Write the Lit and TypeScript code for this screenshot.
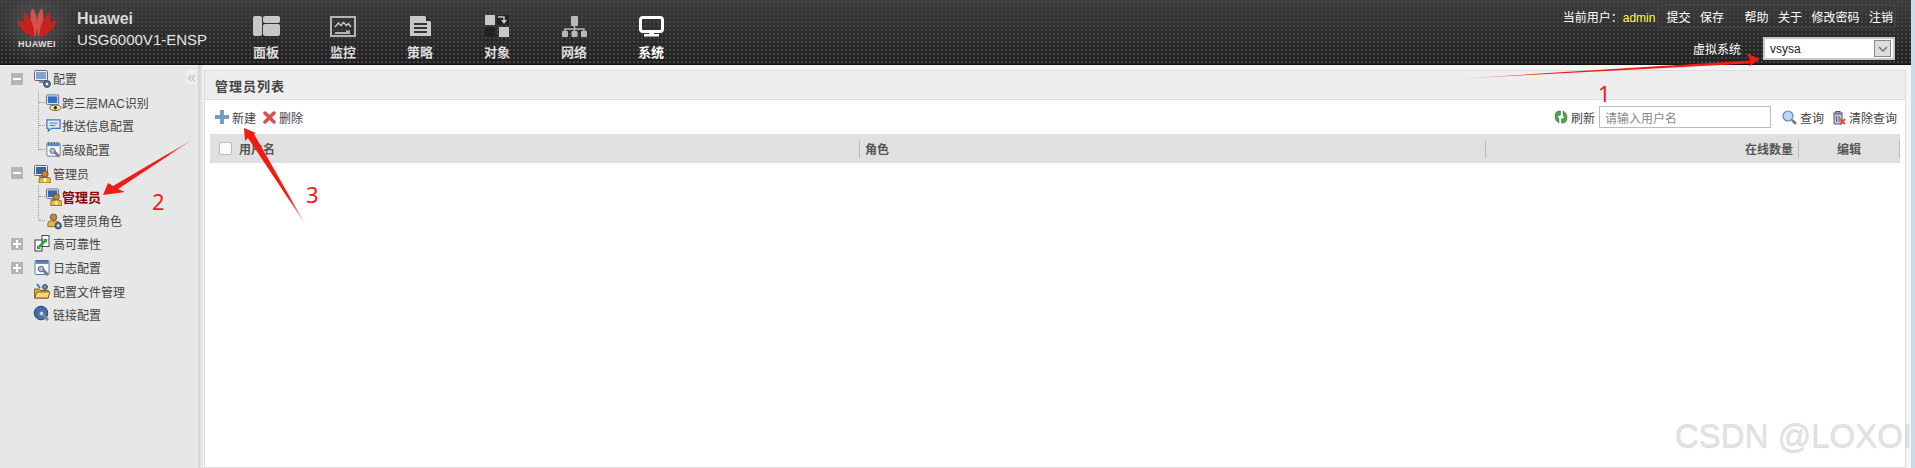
import { LitElement, html, css, svg } from "lit";
import { customElement } from "lit/decorators.js";

const screen = (c = "#3a6fc0") => svg`<rect x="1.5" y="1.5" width="13" height="10" rx="1" fill="#e8eef6" stroke="#667"/><rect x="3" y="3" width="10" height="7" fill="${c}"/><rect x="6" y="12" width="5" height="2" fill="#889"/>`;
const person = svg`<circle cx="12" cy="10" r="3.2" fill="#c9853c" stroke="#5a3a14" stroke-width=".7"/><path d="M6 19v-3q0-2.5 3-2.5h6q3 0 3 2.5v3z" fill="#e8b93c" stroke="#6a4d10" stroke-width=".7"/><path d="M11 14h2v4h-2z" fill="#fff"/>`;
const gear = svg`<circle cx="14" cy="15" r="3.4" fill="#5b7a9a" stroke="#2c4560"/><circle cx="14" cy="15" r="1.2" fill="#fff"/>`;
const calendar = svg`<rect x="2" y="2.5" width="14" height="14" rx="1" fill="#fff" stroke="#5e7da6"/><rect x="2.5" y="3" width="13" height="3" fill="#5b8ec9"/><path d="M4 2v2M7 2v2M10 2v2M13 2v2" stroke="#445"/><path d="M8 10l7 7" stroke="#778" stroke-width="3"/><circle cx="8" cy="11" r="2.8" fill="#bbc" stroke="#667"/>`;

const ICONS: Record<string, unknown> = {
  config: svg`${screen("#7fa2d0")}${gear}`,
  mac: svg`${screen("#2f6fd0")}<ellipse cx="11" cy="15" rx="6" ry="3" fill="#f4e7a8" stroke="#6a5520"/><circle cx="11" cy="15" r="1.8" fill="#3a2a10"/>`,
  push: svg`<path d="M2 3.5h14v9H7l-3.5 3v-3H2z" fill="#d9e8f8" stroke="#3f78bd" stroke-width="1.3"/><path d="M5 7h8M5 9.5h6" stroke="#3f78bd"/>`,
  calendar,
  admin: svg`${screen("#3a64a8")}${person}`,
  role: svg`<circle cx="9" cy="6" r="3.5" fill="#c9853c" stroke="#5a3a14" stroke-width=".7"/><path d="M3 16v-3q0-3 3-3h6q3 0 3 3v3z" fill="#e8b93c" stroke="#6a4d10" stroke-width=".7"/>${gear}`,
  ha: svg`<rect x="9" y="1.5" width="7" height="11" fill="#fff" stroke="#445"/><rect x="2" y="6" width="7" height="11" fill="#fff" stroke="#335"/><path d="M6 13l7-7" stroke="#2fa32f" stroke-width="2.5"/><path d="M10 5h4v4zM4 11v4h4z" fill="#2fa32f"/>`,
  folder: svg`<path d="M1.5 7h5l1 1.5h8V16h-14z" fill="#e2b23f" stroke="#80601a"/><path d="M1.5 16L4 10h13l-2 6z" fill="#f6d878" stroke="#80601a"/><circle cx="12" cy="5" r="2.4" fill="#6f8fb5" stroke="#345"/><path d="M4 2l3 4" stroke="#3f78bd" stroke-width="2"/>`,
  link: svg`<circle cx="8" cy="8" r="6.8" fill="#3f6fa8" stroke="#24476f"/><path d="M8 8l7 7" stroke="#7b8794" stroke-width="3"/><circle cx="8.5" cy="8.5" r="2.5" fill="#c7ced6" stroke="#667"/>`,
};
const icon = (n: string) => html`<svg class="ticon" viewBox="0 0 18 19" width="18" height="19">${ICONS[n]}</svg>`;

const NAV: [string, unknown, boolean?][] = [
  ["面板", svg`<rect x="2" y="1" width="9" height="20" rx="2"/><rect x="12" y="1" width="17" height="7" rx="2"/><rect x="12" y="9" width="17" height="12" rx="2"/>`],
  ["监控", svg`<rect x="3" y="2" width="24" height="19" fill="none" stroke="#b4b4b4" stroke-width="2"/><path d="M7 12l3.5-4 2.5 2.5 2.5-3 3 3 2-2 2.5 3.5" fill="none" stroke="#ccc" stroke-width="1.4"/><path d="M7 17h11v-1.5h4V19H7z" fill="#b4b4b4"/>`],
  ["策略", svg`<path d="M5 1h15l6 6v14H5z" fill="#c8c8c8"/><path d="M21 1l5 5h-5z" fill="#2a2a2a"/><path d="M9 9h13M9 13h13M9 17h13" stroke="#333" stroke-width="2"/>`],
  ["对象", svg`<rect x="3" y="0" width="10" height="10" fill="#c8c8c8"/><rect x="3" y="12" width="10" height="10" fill="#222"/><rect x="15" y="0" width="12" height="10" fill="#222"/><rect x="17" y="12" width="10" height="10" fill="#c8c8c8"/><path d="M16 2h6v4" fill="none" stroke="#c8c8c8" stroke-width="1.5"/><path d="M19 5h6l-3 4z" fill="#c8c8c8"/>`],
  ["网络", svg`<rect x="12" y="1" width="7" height="10" rx="1" fill="#b8b8b8"/><path d="M15.5 11v3M6 17v-3h19v3M15.5 14v3" fill="none" stroke="#b8b8b8" stroke-width="1.5"/><rect x="3" y="16" width="6" height="6" rx="1" fill="#b8b8b8"/><rect x="12.5" y="16" width="6" height="6" rx="1" fill="#b8b8b8"/><rect x="22" y="16" width="6" height="6" rx="1" fill="#b8b8b8"/>`],
  ["系统", svg`<rect x="4.5" y="2.5" width="22" height="14" rx="2.5" fill="none" stroke="#fff" stroke-width="3"/><rect x="13" y="17" width="5" height="2.5" fill="#fff"/><rect x="8" y="19" width="15" height="2.5" fill="#fff"/>`, true],
];

@customElement("app-root")
export class AppRoot extends LitElement {
  static styles = css`
    :host { display: block; width: 1915px; height: 468px; overflow: hidden; position: relative; background: #fff;
      font: 12px "Liberation Sans", "Noto Sans CJK SC", sans-serif; color: #333; }
    .page { display: flex; flex-direction: column; height: 100%; width: 1911px; }
    .head { height: 65px; flex: none; display: flex; background-color: #2b2b2b; color: #fff;
      background-image: radial-gradient(circle, #444 1px, transparent 1.2px), linear-gradient(#3c3c3c, #1f1f1f);
      background-size: 4px 4px, 100% 100%; box-shadow: inset 0 -1px #111; }
    .logo { width: 74px; flex: none; display: flex; flex-direction: column; align-items: center; padding-top: 6px; box-sizing: border-box;
      background: radial-gradient(ellipse at 50% 45%, rgba(110,110,110,.5), transparent 75%); }
    .logo span { font-size: 9px; font-weight: bold; letter-spacing: .3px; margin-top: 1px; color: #ddd; }
    .brand { width: 163px; flex: none; padding: 9px 0 0 3px; box-sizing: border-box; }
    .brand b { display: block; font-size: 16px; line-height: 20px; color: #d8d8d8; }
    .brand span { display: block; font-size: 15px; line-height: 20px; margin-top: 1px; color: #e4e4e4; }
    .nav { display: flex; gap: 37px; padding: 15px 0 0 9px; }
    .nav div { width: 40px; display: flex; flex-direction: column; align-items: center; gap: 4px; color: #ddd; font-size: 13px; font-weight: bold; }
    .nav svg { fill: #c8c8c8; }
    .nav .on { color: #fff; }
    .right { margin-left: auto; display: flex; flex-direction: column; align-items: flex-end; padding: 4px 15px 0 0; }
    .top { display: flex; align-items: center; height: 24px; font-size: 12px; }
    .top .me { color: #fff; }
    .top .me em { font-style: normal; color: #ffff33; }
    .links { display: flex; border: 1px solid #444; border-radius: 2px; height: 24px; align-items: center; padding: 0 2px 0 7px; gap: 9.5px; margin-left: 3px; box-sizing: border-box; }
    .links .gap { margin-left: 11px; }
    .vs { display: flex; align-items: center; margin-top: 9px; margin-right: 1px; }
    .vs label { margin-right: 22px; }
    .sel { width: 132px; height: 23px; box-sizing: border-box; border: 2px solid #c8c8c8; background: #fff; color: #222; display: flex; align-items: center; justify-content: space-between; padding: 0 2px 0 5px; font-size: 12px; }
    .sel i { width: 17px; height: 17px; box-sizing: border-box; border: 1px solid #888; background: #ddd; display: flex; align-items: center; justify-content: center; }

    .body { flex: 1; display: flex; min-height: 0; }
    .side { width: 198px; flex: none; background: #e7e7e7; padding: 1px 0 0 11px; box-sizing: border-box; font-size: 12px; position: relative; border-top: 1px solid #f5f5f5; }
    .split { width: 6px; flex: none; background: linear-gradient(90deg, #d0d0d0, #f4f4f4); }
    .chev { position: absolute; right: 1px; top: 4px; color: #bdbdbd; background: #eee; font-size: 15px; line-height: 13px; width: 11px; height: 14px; text-align: center; }
    .row { height: 23.6px; display: flex; align-items: center; color: #444; white-space: nowrap; }
    .box { width: 12px; height: 12px; background: #b5b5b5; flex: none; display: flex; align-items: center; justify-content: center; }
    .nobox { width: 12px; flex: none; }
    .row .ticon { flex: none; margin: 0 2px 0 10px; }
    .sub { margin-left: 27px; padding-left: 0; border-left: 1px dotted #999; margin-bottom: 11.8px; }
    .sub.three { height: 59px; }
    .sub.two { height: 35.4px; }
    .sub .row .ticon { margin: 0; width: 17px; }
    .sub .row::before { content: ""; width: 6px; border-top: 1px dotted #999; flex: none; }
    .hi { color: #8b0000; font-weight: bold; font-size: 13px; }

    .main { flex: 1; min-width: 0; padding: 5px 5px 0 0; background: #f6f6f6; display: flex; }
    .panel { flex: 1; background: #fff; border: 1px solid #dcdcdc; display: flex; flex-direction: column; }
    .ptitle { height: 29px; box-sizing: border-box; background: #eee; border-bottom: 1px solid #e0e0e0; padding-left: 10px; display: flex; align-items: center; font-weight: bold; color: #444; font-size: 13px; letter-spacing: 1px; }
    .tools { height: 34px; display: flex; align-items: center; padding: 0 8px 0 10px; flex: none; }
    .tool { display: flex; align-items: center; gap: 3px; color: #444; }
    .tool + .tool { margin-left: 7px; }
    .spacer { flex: 1; }
    .search { width: 172px; height: 22px; box-sizing: border-box; border: 1px solid #bbb; padding-left: 5px; color: #888; display: flex; align-items: center; margin: 0 11px 0 4px; }
    .thead { margin: 0 5px; height: 29px; background: #e0e0e0; display: grid; grid-template-columns: 650px 626px 1fr 101px; align-items: center; color: #555; font-weight: bold; }
    .th { height: 18px; display: flex; align-items: center; padding-left: 5px; border-right: 1px solid #bbb; }
    .th.first { padding-left: 9px; gap: 7px; }
    .th.r { justify-content: flex-end; padding-right: 5px; }
    .th.c { justify-content: center; padding: 0; }
    .check { width: 13px; height: 13px; box-sizing: border-box; border: 1px solid #bbb; border-radius: 2px; background: #fafafa; }

    .edge { position: absolute; right: 0; top: 0; bottom: 0; width: 4px; background: #c9dbe6; }
    .wm { position: absolute; left: 1675px; top: 416px; font-size: 33px; line-height: 40px; color: #e2e2e2; text-shadow: 0 1px 1px rgba(0,0,0,.15); white-space: nowrap; width: 236px; overflow: hidden; }
    .anno { position: absolute; inset: 0; pointer-events: none; }
    .num { position: absolute; color: #f01c14; font-size: 22px; line-height: 24px; font-family: "Noto Sans", sans-serif; }
    .n1 { left: 1598px; top: 81px; }
    .n2 { left: 152px; top: 189px; }
    .n3 { left: 306px; top: 182px; }
  `;

  private tree(name: string, iconName: string, state?: "-" | "+") {
    return html`<div class="row">
      ${state
        ? html`<div class="box"><svg width="8" height="8"><path d="M0 4h8${state === "+" ? "M4 0v8" : ""}" stroke="#fff" stroke-width="2"/></svg></div>`
        : html`<div class="nobox"></div>`}
      ${icon(iconName)}<span>${name}</span>
    </div>`;
  }

  private leaf(name: string, iconName: string, hi = false) {
    return html`<div class="row">${icon(iconName)}<span class=${hi ? "hi" : ""}>${name}</span></div>`;
  }

  render() {
    return html`
      <div class="page">
        <div class="head">
          <div class="logo">
            <svg width="42" height="32" viewBox="0 0 42 32" fill="#c8201f">
              <path d="M19.5 31C15 23 13 12 16 2c6 6 6 18 3.5 29z" fill="#d8504a"/>
              <path d="M22.5 31c4.5-8 6.5-19 3.5-29-6 6-6 18-3.5 29z" fill="#d8504a"/>
              <path d="M18.5 31C11 25 6 15 8 6c6 4 11 15 10.5 25z"/>
              <path d="M23.5 31c7.5-6 12.5-16 10.5-25-6 4-11 15-10.5 25z"/>
              <path d="M18 31C10 29 3 22 1 14c7 1 14 8 17 17z"/>
              <path d="M24 31c8-2 15-9 17-17-7 1-14 8-17 17z"/>
            </svg>
            <span>HUAWEI</span>
          </div>
          <div class="brand"><b>Huawei</b><span>USG6000V1-ENSP</span></div>
          <div class="nav">
            ${NAV.map(([t, p, on]) => html`<div class=${on ? "on" : ""}><svg width="30" height="23" viewBox="0 0 30 23">${p}</svg><span>${t}</span></div>`)}
          </div>
          <div class="right">
            <div class="top">
              <span class="me">当前用户：<em>admin</em></span>
              <div class="links"><span>提交</span><span>保存</span><span class="gap">帮助</span><span>关于</span><span>修改密码</span><span>注销</span></div>
            </div>
            <div class="vs"><label>虚拟系统</label>
              <div class="sel">vsysa<i><svg width="10" height="6"><path d="M1 1l4 4 4-4" fill="none" stroke="#777" stroke-width="1.5"/></svg></i></div>
            </div>
          </div>
        </div>
        <div class="body">
          <div class="side">
            <div class="chev">«</div>
            ${this.tree("配置", "config", "-")}
            <div class="sub three">
              ${this.leaf("跨三层MAC识别", "mac")}${this.leaf("推送信息配置", "push")}${this.leaf("高级配置", "calendar")}
            </div>
            ${this.tree("管理员", "admin", "-")}
            <div class="sub two">
              ${this.leaf("管理员", "admin", true)}${this.leaf("管理员角色", "role")}
            </div>
            ${this.tree("高可靠性", "ha", "+")}
            ${this.tree("日志配置", "calendar", "+")}
            ${this.tree("配置文件管理", "folder")}
            ${this.tree("链接配置", "link")}
          </div>
          <div class="split"></div>
          <div class="main">
            <div class="panel">
              <div class="ptitle">管理员列表</div>
              <div class="tools">
                <div class="tool"><svg width="14" height="14" viewBox="0 0 14 14"><path d="M5.5 0h3v5.5H14v3H8.5V14h-3V8.5H0v-3h5.5z" fill="#6f9cc9" stroke="#4d78a5" stroke-width=".5"/></svg>新建</div>
                <div class="tool"><svg width="13" height="13" viewBox="0 0 13 13"><path d="M2 2l9 9M11 2l-9 9" stroke="#d6534f" stroke-width="3.5" stroke-linecap="round"/></svg>删除</div>
                <div class="spacer"></div>
                <div class="tool"><svg width="14" height="14" viewBox="0 0 14 14"><path d="M6.5 1H4C1.5 2 1 4 1 7c0 3 2 5 4 6V9L3.5 6 6.5 5zM7.5 13H10c2.5-1 3-3 3-6 0-3-2-5-4-6v4l1.5 3-3 1z" fill="#4fa04f" stroke="#2f7a2f" stroke-width=".5"/></svg>刷新</div>
                <div class="search">请输入用户名</div>
                <div class="tool"><svg width="15" height="15" viewBox="0 0 15 15"><circle cx="6" cy="6" r="5" fill="#bcd8f4" stroke="#5a88c0" stroke-width="1.2"/><path d="M10 10l4 4" stroke="#777" stroke-width="2.5"/></svg>查询</div>
                <div class="tool"><svg width="15" height="15" viewBox="0 0 15 15"><path d="M2 3h10M5 3V1.5h4V3" fill="none" stroke="#557" stroke-width="1.2"/><path d="M3 4h8v10H3z" fill="#c8cbe4" stroke="#557"/><path d="M5.5 6v6M8 6v6" stroke="#557"/><path d="M9 9l5 5M14 9l-5 5" stroke="#e0552a" stroke-width="2"/></svg>清除查询</div>
              </div>
              <div class="thead">
                <div class="th first"><div class="check"></div>用户名</div>
                <div class="th">角色</div>
                <div class="th r">在线数量</div>
                <div class="th c">编辑</div>
              </div>
            </div>
          </div>
        </div>
      </div>
      <div class="edge"></div>
      <div class="wm">CSDN @LOXOI</div>
      <svg class="anno" width="1915" height="468" viewBox="0 0 1915 468">
        <defs>
          <linearGradient id="g1" x1="0" x2="1"><stop offset="0" stop-color="#f01c14" stop-opacity=".1"/><stop offset=".3" stop-color="#f01c14"/></linearGradient>
          <linearGradient id="g2" x1="1" x2="0"><stop offset="0" stop-color="#f01c14" stop-opacity=".1"/><stop offset=".3" stop-color="#f01c14"/></linearGradient>
          <linearGradient id="g3" x1="0" x2="0" y1="1" y2="0"><stop offset="0" stop-color="#f01c14" stop-opacity=".1"/><stop offset=".3" stop-color="#f01c14"/></linearGradient>
        </defs>
        <path d="M1453 79L1750 60.5 1747 53.5 1760 59 1749 66.5 1750 63.5z" fill="url(#g1)"/>
        <path d="M195 138L113 186 108 183 103 195 125 192 118 189z" fill="url(#g2)"/>
        <path d="M307 227L254 134 256 133 244 128 245 141 248 138z" fill="url(#g3)"/>
      </svg>
      <div class="num n1">1</div>
      <div class="num n2">2</div>
      <div class="num n3">3</div>
    `;
  }
}
